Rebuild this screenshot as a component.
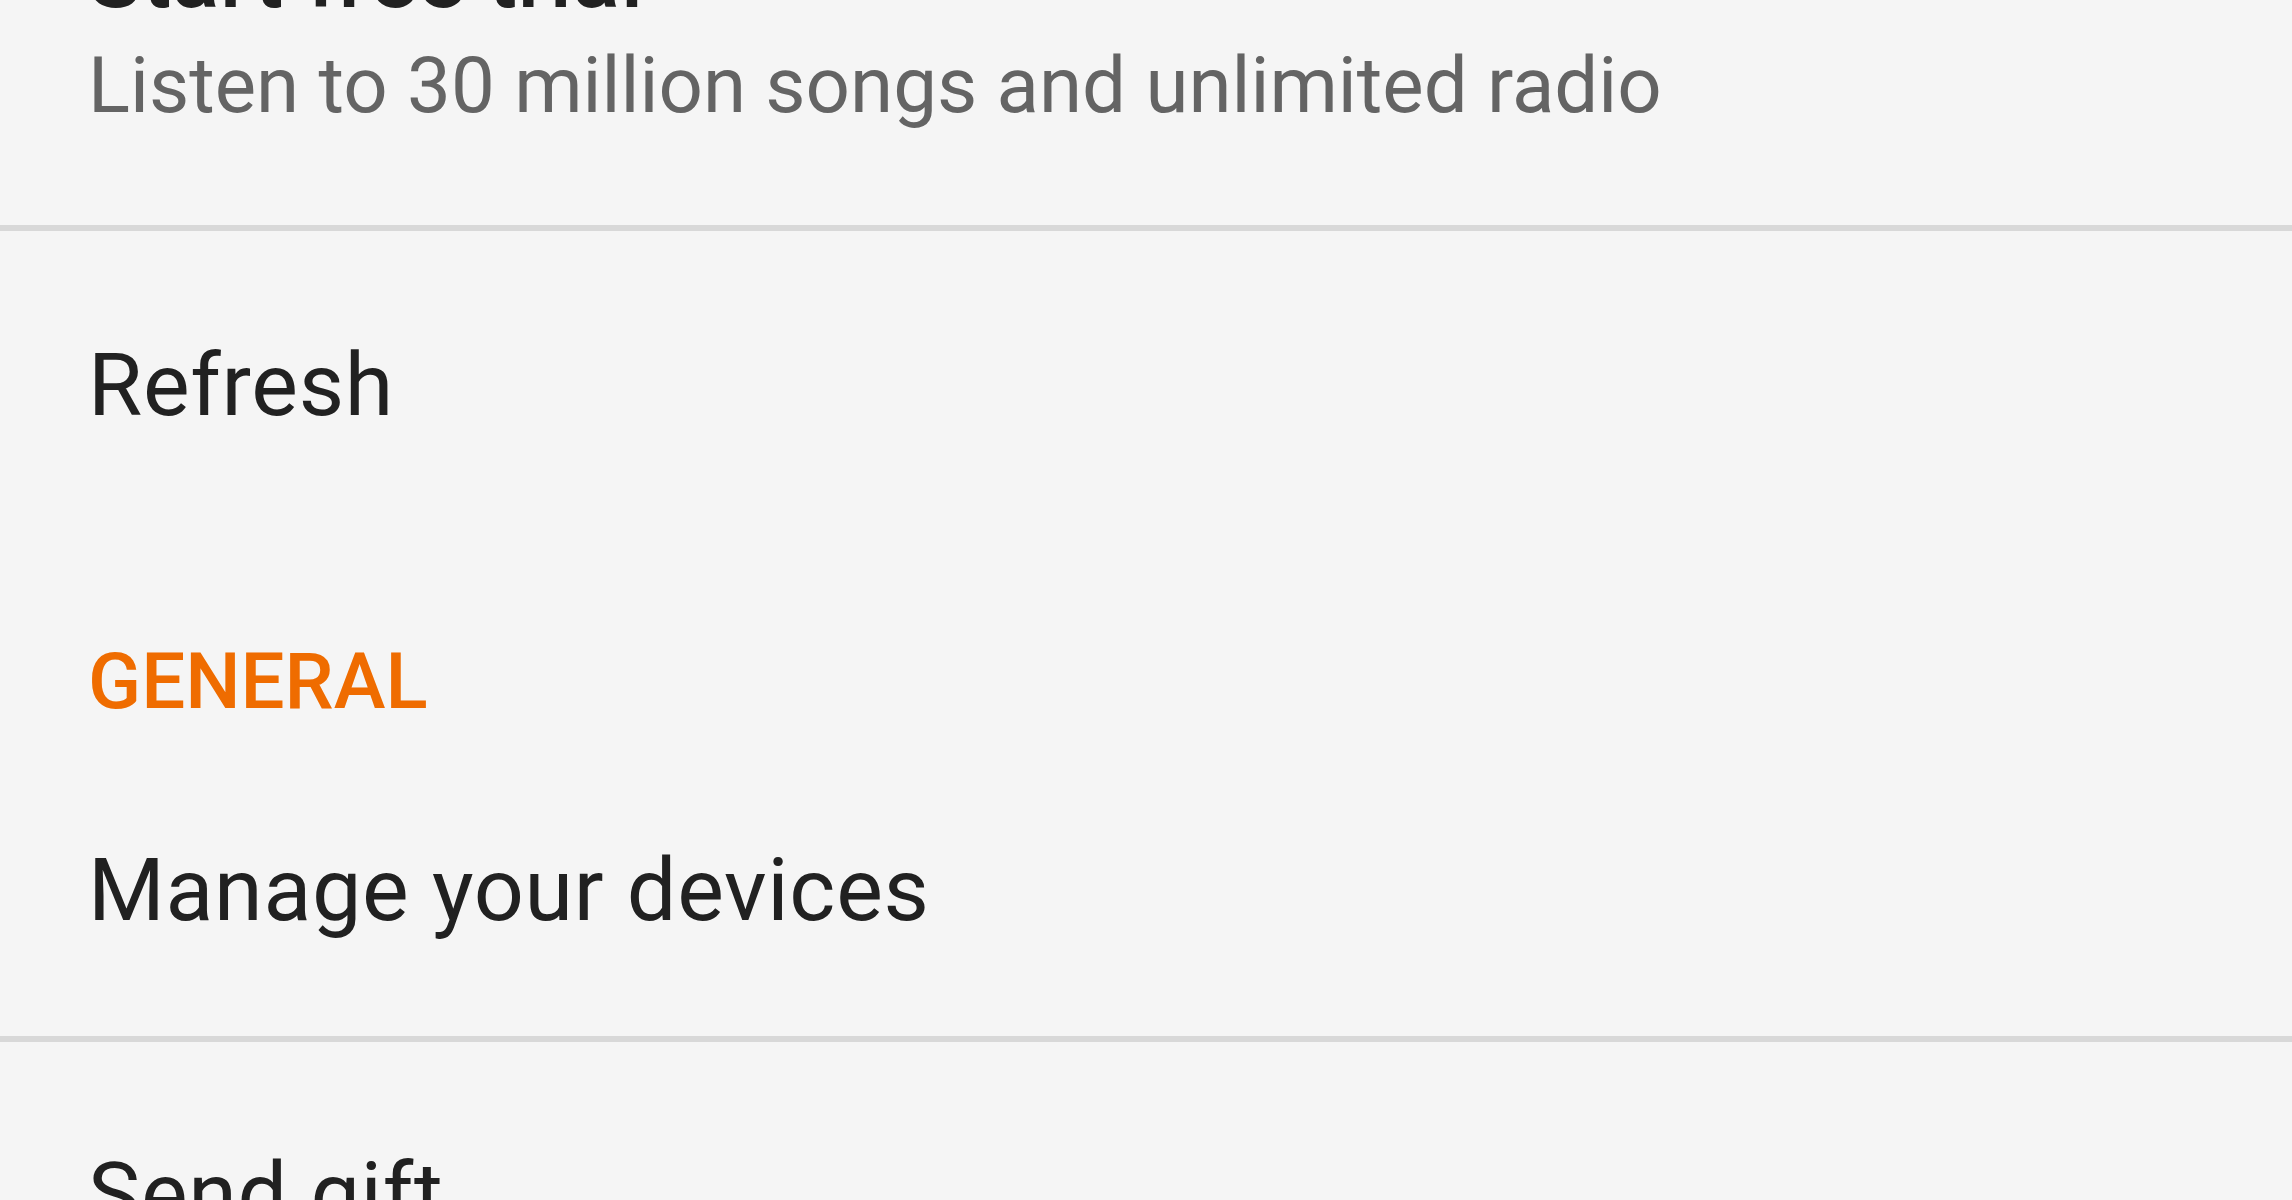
export default function App() {
  const Divider = () => <div className="h-[6px] w-full bg-[#d8d8d8]" />;
  return (
    <div className="h-[1200px] w-full overflow-hidden bg-[#f5f5f5] font-[Roboto,sans-serif]">
      <div className="-mt-[75px]">
        {/* Start free trial */}
        <div className="pl-[88px] pb-[93px]">
          <div className="text-[88px] leading-[104px] font-medium tracking-[0.7px] text-[#212121] whitespace-nowrap">
            Start free trial
          </div>
          <div className="mt-[11px] text-[78px] leading-[92px] text-[#646464] whitespace-nowrap">
            Listen to 30 million songs and unlimited radio
          </div>
        </div>
        <Divider />
        {/* Refresh */}
        <div className="pl-[88px] pt-[102px] pb-[99px]">
          <div className="text-[88px] leading-[104px] tracking-[0.7px] text-[#212121] whitespace-nowrap">Refresh</div>
        </div>
        {/* General header */}
        <div className="pl-[88px] pt-[100px] pb-[110px]">
          <div className="text-[78px] leading-[92px] font-medium text-[#ef6c00] whitespace-nowrap">GENERAL</div>
        </div>
        {/* Manage your devices */}
        <div className="pl-[88px] pb-[94px]">
          <div className="text-[88px] leading-[104px] tracking-[0.7px] text-[#212121] whitespace-nowrap">Manage your devices</div>
        </div>
        <Divider />
        {/* Send gift */}
        <div className="pl-[88px] pt-[100px] pb-[100px]">
          <div className="text-[88px] leading-[104px] tracking-[0.7px] text-[#212121] whitespace-nowrap">Send gift</div>
        </div>
      </div>
    </div>
  );
}
